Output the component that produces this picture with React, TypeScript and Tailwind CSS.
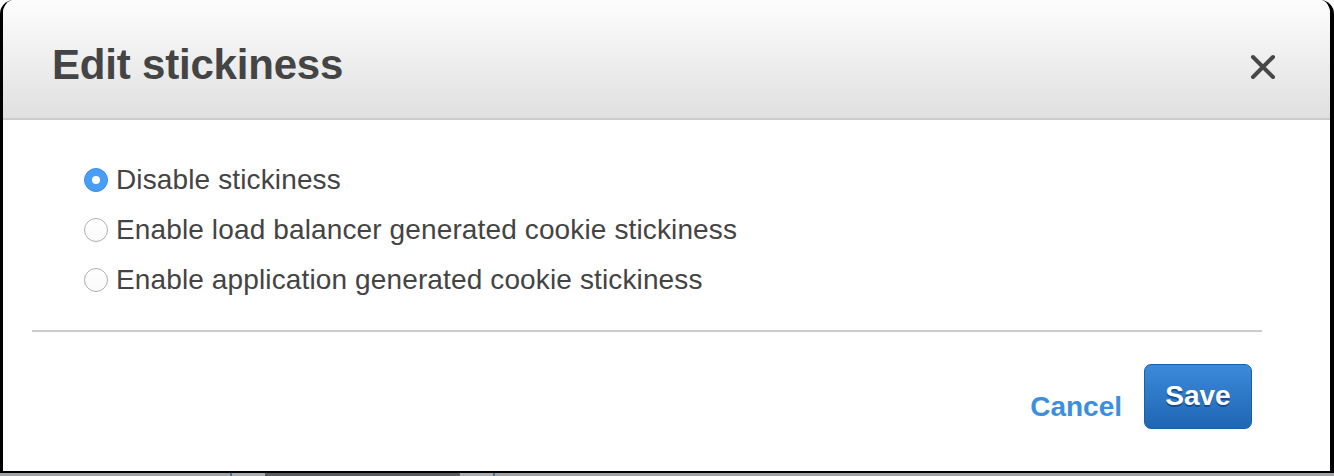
import React from "react";

function Radio({ checked }: { checked: boolean }) {
  if (checked) {
    return (
      <div className="w-[24px] h-[24px] rounded-full bg-[#4a9df6] border border-[#3d8fe6] flex items-center justify-center shrink-0">
        <div className="w-[8px] h-[8px] rounded-full bg-white" />
      </div>
    );
  }
  return (
    <div className="w-[24px] h-[24px] rounded-full bg-gradient-to-b from-[#ffffff] to-[#fafafa] border border-[#b0b0b0] shrink-0" />
  );
}

export default function App() {
  const options = [
    { label: "Disable stickiness", checked: true },
    { label: "Enable load balancer generated cookie stickiness", checked: false },
    { label: "Enable application generated cookie stickiness", checked: false },
  ];
  return (
    <div
      className="w-[1334px] h-[476px] bg-white flex flex-col overflow-hidden"
      style={{ fontFamily: '"Liberation Sans", Arial, Helvetica, sans-serif' }}
    >
      <div className="h-[473px] flex flex-col border-l-[3px] border-r-[4px] border-b-[2px] border-black rounded-tl-[14px] rounded-tr-[14px] overflow-hidden bg-white">
        {/* Header */}
        <div className="h-[120px] shrink-0 bg-gradient-to-b from-[#fdfdfd] to-[#e0e0e0] border-b-2 border-[#cbcbcb] flex items-start justify-between pl-[49px] pr-[54px]">
          <h1 className="pt-[44px] text-[42px] leading-none font-bold text-[#444444] tracking-[-0.2px]">
            Edit stickiness
          </h1>
          <button className="mt-[54px] w-[26px] h-[26px] flex items-center justify-center">
            <svg width="26" height="26" viewBox="0 0 26 26">
              <path
                d="M3 3 L23 23 M23 3 L3 23"
                stroke="#474747"
                strokeWidth="4"
                strokeLinecap="round"
              />
            </svg>
          </button>
        </div>

        {/* Body */}
        <div className="pt-[35px] pl-[81px] flex flex-col">
          {options.map((o) => (
            <label key={o.label} className="h-[50px] flex items-center gap-[8px]">
              <Radio checked={o.checked} />
              <span className="text-[28px] leading-none text-[#444444] tracking-[0.13px]">{o.label}</span>
            </label>
          ))}
        </div>

        <div className="mt-[25px] ml-[29px] mr-[68px] h-[2px] bg-[#cccccc]" />

        {/* Footer */}
        <div className="mt-[32px] flex justify-end items-start pr-[78px] gap-[22px]">
          <a className="mt-[29px] text-[28px] leading-none font-bold text-[#3b8fdf]">Cancel</a>
          <button
            className="w-[108px] h-[65px] rounded-[7px] border border-[#1c5ea8] bg-gradient-to-b from-[#3b8ad9] to-[#1f66b4] text-white text-[28px] font-bold leading-none flex items-center justify-center pb-[2px]"
            style={{ textShadow: "0 2px 0 rgba(10,50,110,0.6)" }}
          >
            Save
          </button>
        </div>
      </div>

      {/* Background strip */}
      <div className="h-[3px] bg-[#9ea3a8] flex">
        <div className="ml-[230px] w-[265px] h-full border-l-2 border-r-2 border-[#4a78a4] bg-[#a9adb1] flex">
          <div className="ml-[33px] w-[195px] h-full bg-[#5a5e63]" />
        </div>
      </div>
    </div>
  );
}
